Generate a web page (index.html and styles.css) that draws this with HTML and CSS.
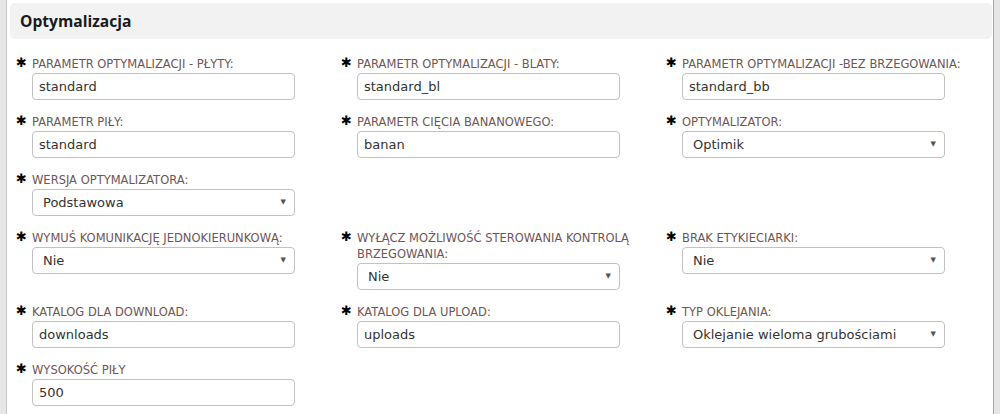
FILE: index.html
```html
<!DOCTYPE html>
<html lang="pl">
<head>
<meta charset="utf-8">
<title>Optymalizacja</title>
<link rel="stylesheet" href="styles.css">
</head>
<body>
<div class="panel">
  <div class="panel-head"><h2 class="panel-title">Optymalizacja</h2></div>
  <div class="grid">
    <div class="field"><span class="req">✱</span><div class="fbody"><label class="flabel">Parametr optymalizacji - płyty:</label><div class="input">standard</div></div></div>
    <div class="field"><span class="req">✱</span><div class="fbody"><label class="flabel">Parametr optymalizacji - blaty:</label><div class="input">standard_bl</div></div></div>
    <div class="field"><span class="req">✱</span><div class="fbody"><label class="flabel">Parametr optymalizacji -bez brzegowania:</label><div class="input">standard_bb</div></div></div>

    <div class="field"><span class="req">✱</span><div class="fbody"><label class="flabel">Parametr piły:</label><div class="input">standard</div></div></div>
    <div class="field"><span class="req">✱</span><div class="fbody"><label class="flabel">Parametr cięcia bananowego:</label><div class="input">banan</div></div></div>
    <div class="field"><span class="req">✱</span><div class="fbody"><label class="flabel">Optymalizator:</label><div class="input select">Optimik<span class="arrow">▼</span></div></div></div>

    <div class="field"><span class="req">✱</span><div class="fbody"><label class="flabel">Wersja optymalizatora:</label><div class="input select">Podstawowa<span class="arrow">▼</span></div></div></div>
    <div class="field empty"></div>
    <div class="field empty"></div>

    <div class="field"><span class="req">✱</span><div class="fbody"><label class="flabel">Wymuś komunikację jednokierunkową:</label><div class="input select">Nie<span class="arrow">▼</span></div></div></div>
    <div class="field"><span class="req">✱</span><div class="fbody"><label class="flabel">Wyłącz możliwość sterowania kontrolą brzegowania:</label><div class="input select">Nie<span class="arrow">▼</span></div></div></div>
    <div class="field"><span class="req">✱</span><div class="fbody"><label class="flabel">Brak etykieciarki:</label><div class="input select">Nie<span class="arrow">▼</span></div></div></div>

    <div class="field"><span class="req">✱</span><div class="fbody"><label class="flabel">Katalog dla download:</label><div class="input">downloads</div></div></div>
    <div class="field"><span class="req">✱</span><div class="fbody"><label class="flabel">Katalog dla upload:</label><div class="input">uploads</div></div></div>
    <div class="field"><span class="req">✱</span><div class="fbody"><label class="flabel">Typ oklejania:</label><div class="input select">Oklejanie wieloma grubościami<span class="arrow">▼</span></div></div></div>

    <div class="field"><span class="req">✱</span><div class="fbody"><label class="flabel">Wysokość piły</label><div class="input">500</div></div></div>
  </div>
</div>
</body>
</html>
```
FILE: styles.css
```css
html, body {
  margin: 0;
  padding: 0;
}
body {
  background: #e6e6e6;
  font-family: "DejaVu Sans", Verdana, sans-serif;
  height: 414px;
  overflow: hidden;
}
.panel {
  margin-left: 6px;
  width: 988px;
  min-height: 414px;
  background: #fff;
  border-left: 1px solid #c4c4c4;
  border-right: 1px solid #a9a9a9;
  padding: 3px 3px 0 3px;
  box-sizing: border-box;
}
.panel-head {
  background: #f2f2f2;
  border-radius: 5px;
  height: 36px;
  padding: 0 10px;
  display: flex;
  align-items: center;
  width: 982px;
  box-sizing: border-box;
}
.panel-title {
  margin: 0;
  font-family: "Open Sans", sans-serif;
  font-weight: 700;
  font-size: 15.6px;
  color: #1a1a1a;
  line-height: 20px;
}
.grid {
  display: grid;
  grid-template-columns: 325px 325px 325px;
  padding: 17px 0 0 7px;
  row-gap: 14px;
}
.field {
  display: flex;
  align-items: flex-start;
}
.req {
  width: 15px;
  flex: none;
  font-size: 13px;
  line-height: 13px;
  color: #000;
  margin-top: 0;
  margin-left: -1px;
}
.fbody {
  width: 298px;
  margin-left: 1px;
}
.flabel {
  display: block;
  text-transform: uppercase;
  font-size: 11.5px;
  letter-spacing: 0;
  line-height: 16px;
  color: #6e5656;
  margin: 0 0 1px 0;
}
.input {
  position: relative;
  width: 263px;
  height: 27px;
  box-sizing: border-box;
  border: 1px solid #c2c2c2;
  border-radius: 4px;
  padding: 0 6px;
  font-size: 13px;
  line-height: 25px;
  color: #333;
  background: #fff;
}
.select {
  padding-left: 10px;
}
.arrow {
  position: absolute;
  right: 8px;
  top: 0;
  font-size: 7px;
  color: #555;
  line-height: 25px;
}
```
